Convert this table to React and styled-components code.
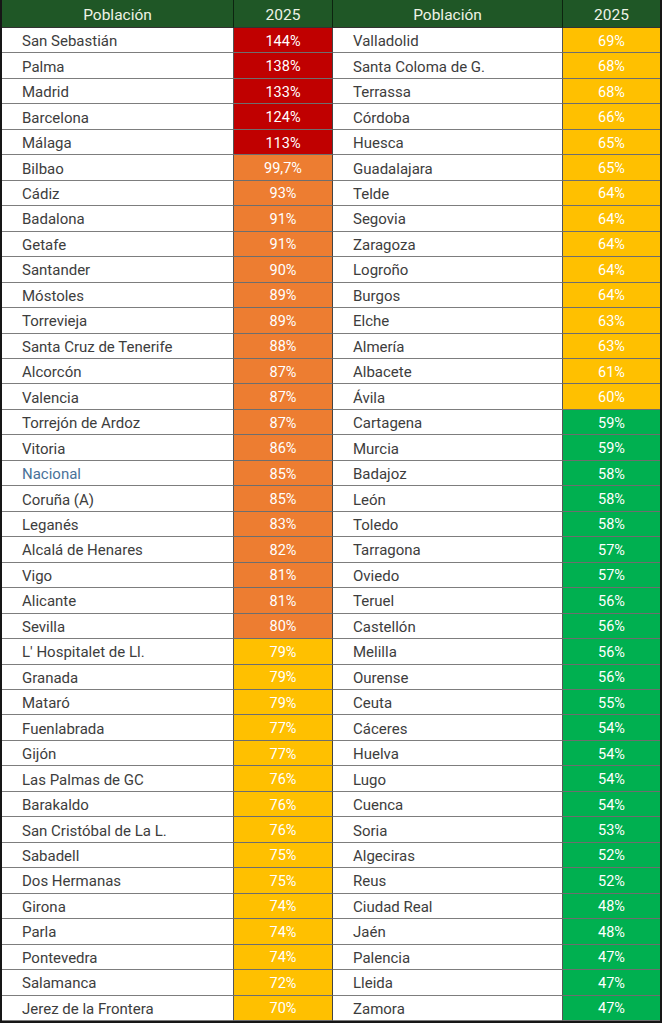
import React from 'react';
import styled, {createGlobalStyle} from 'styled-components';

const Global = createGlobalStyle`
  html, body {margin: 0; padding: 0; background: #fff;}
  body {font-family: Roboto, "Liberation Sans", Arial, sans-serif;}
`;

const left = [
    ['San Sebastián', '144%', 144], ['Palma', '138%', 138], ['Madrid', '133%', 133],
    ['Barcelona', '124%', 124], ['Málaga', '113%', 113], ['Bilbao', '99,7%', 99.7],
    ['Cádiz', '93%', 93], ['Badalona', '91%', 91], ['Getafe', '91%', 91],
    ['Santander', '90%', 90], ['Móstoles', '89%', 89], ['Torrevieja', '89%', 89],
    ['Santa Cruz de Tenerife', '88%', 88], ['Alcorcón', '87%', 87], ['Valencia', '87%', 87],
    ['Torrejón de Ardoz', '87%', 87], ['Vitoria', '86%', 86], ['Nacional', '85%', 85],
    ['Coruña (A)', '85%', 85], ['Leganés', '83%', 83], ['Alcalá de Henares', '82%', 82],
    ['Vigo', '81%', 81], ['Alicante', '81%', 81], ['Sevilla', '80%', 80],
    ["L' Hospitalet de Ll.", '79%', 79], ['Granada', '79%', 79], ['Mataró', '79%', 79],
    ['Fuenlabrada', '77%', 77], ['Gijón', '77%', 77], ['Las Palmas de GC', '76%', 76],
    ['Barakaldo', '76%', 76], ['San Cristóbal de La L.', '76%', 76], ['Sabadell', '75%', 75],
    ['Dos Hermanas', '75%', 75], ['Girona', '74%', 74], ['Parla', '74%', 74],
    ['Pontevedra', '74%', 74], ['Salamanca', '72%', 72], ['Jerez de la Frontera', '70%', 70],
];

const right = [
    ['Valladolid', '69%', 69], ['Santa Coloma de G.', '68%', 68], ['Terrassa', '68%', 68],
    ['Córdoba', '66%', 66], ['Huesca', '65%', 65], ['Guadalajara', '65%', 65],
    ['Telde', '64%', 64], ['Segovia', '64%', 64], ['Zaragoza', '64%', 64],
    ['Logroño', '64%', 64], ['Burgos', '64%', 64], ['Elche', '63%', 63],
    ['Almería', '63%', 63], ['Albacete', '61%', 61], ['Ávila', '60%', 60],
    ['Cartagena', '59%', 59], ['Murcia', '59%', 59], ['Badajoz', '58%', 58],
    ['León', '58%', 58], ['Toledo', '58%', 58], ['Tarragona', '57%', 57],
    ['Oviedo', '57%', 57], ['Teruel', '56%', 56], ['Castellón', '56%', 56],
    ['Melilla', '56%', 56], ['Ourense', '56%', 56], ['Ceuta', '55%', 55],
    ['Cáceres', '54%', 54], ['Huelva', '54%', 54], ['Lugo', '54%', 54],
    ['Cuenca', '54%', 54], ['Soria', '53%', 53], ['Algeciras', '52%', 52],
    ['Reus', '52%', 52], ['Ciudad Real', '48%', 48], ['Jaén', '48%', 48],
    ['Palencia', '47%', 47], ['Lleida', '47%', 47], ['Zamora', '47%', 47],
];

const tone = v => {
    if (v >= 100) return '#c00000';
    if (v >= 80) return '#ed7d31';
    if (v >= 60) return '#ffc000';
    return '#00b050';
};

const Table = styled.div`
  box-sizing: border-box;
  width: 662px;
  height: 1023px;
  border: 2px solid #161616;
  border-top: none;
  display: grid;
  grid-template-columns: 232px 99px 230px 97px;
  grid-template-rows: 28px repeat(39, 1fr);
`;

const Head = styled.div`
  background: #1f5726;
  color: #eef3e6;
  font-size: 15.5px;
  padding-top: 2px;
  display: flex;
  align-items: center;
  justify-content: center;
  border-right: ${p => p.$last ? 'none' : '1px solid #0d2410'};
  border-bottom: 1px solid #333;
`;

const Name = styled.div`
  box-sizing: border-box;
  display: flex;
  align-items: center;
  padding: 2px 0 0 ${p => p.$pad}px;
  font-size: 15px;
  color: ${p => p.$blue ? '#4a7299' : '#3d3d3d'};
  border-bottom: 1px solid #7d7d7d;
  border-right: 1px solid #555;
  white-space: nowrap;
`;

const Value = styled.div`
  box-sizing: border-box;
  display: flex;
  align-items: center;
  justify-content: center;
  padding-top: 2px;
  background: ${p => p.$bg};
  color: #fff;
  font-size: 14.5px;
  border-bottom: 1px solid #6e6e6e;
  border-right: ${p => p.$last ? 'none' : '1px solid #444'};
`;

const App = () => {
    const rows = left.map((l, i) => [l, right[i]]);
    return (
        <>
            <Global/>
            <Table>
                <Head>Población</Head>
                <Head>2025</Head>
                <Head>Población</Head>
                <Head $last>2025</Head>
                {rows.map(([l, r]) => (
                    <React.Fragment key={l[0]}>
                        <Name $pad={20} $blue={l[0] === 'Nacional'}>{l[0]}</Name>
                        <Value $bg={tone(l[2])}>{l[1]}</Value>
                        <Name $pad={20}>{r[0]}</Name>
                        <Value $bg={tone(r[2])} $last>{r[1]}</Value>
                    </React.Fragment>
                ))}
            </Table>
        </>
    );
};

export default App;
